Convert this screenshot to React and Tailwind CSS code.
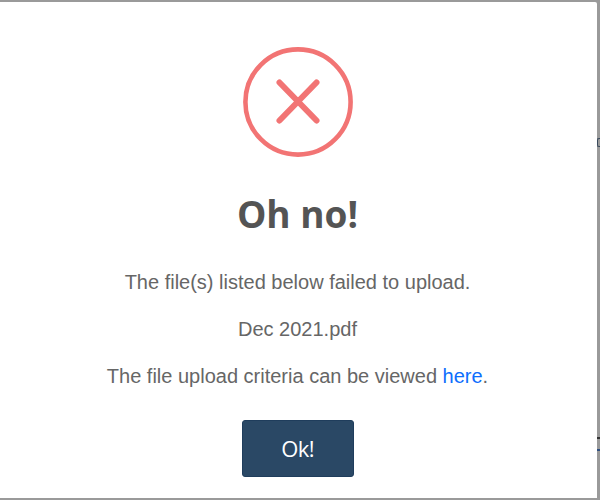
export default function App() {
  return (
    <div className="relative h-[500px] w-[600px] overflow-hidden bg-[#9a9a9a] pt-[2px] pr-[3px] pb-[2px] font-['Liberation_Sans',sans-serif]">
      {/* bits of the page behind the overlay, showing at the right edge */}
      <span className="absolute top-[138px] left-[597px] h-[9px] w-[3px] rounded-l-[2px] border-y border-l border-[#3a4a5c]" />
      <span className="absolute top-[437px] left-[597px] h-[2px] w-[3px] bg-[#333333]" />
      <span className="absolute top-[449px] left-[597px] h-[2px] w-[3px] bg-[#2f4f7f]" />
      <div className="relative flex h-[496px] w-[597px] flex-col items-center rounded-tr-[2px] bg-white pt-[45px] pr-[2px]">
        <svg width="110" height="110" viewBox="0 0 110 110" fill="none" className="shrink-0">
          <circle cx="55" cy="55" r="52.6" stroke="#f27474" strokeWidth="4.6" />
          <path d="M36.5 35.5 L73.5 73.5 M73.5 35.5 L36.5 73.5" stroke="#f27474" strokeWidth="6" strokeLinecap="round" />
        </svg>
        <h2 className="mt-[32px] font-['Open_Sans',sans-serif] text-[37px] leading-[50px] font-bold text-[#545454]">Oh no!</h2>
        <p className="mt-[30px] text-[20px] leading-[27px] text-[#666666]">The file(s) listed below failed to upload.</p>
        <p className="mt-[20px] text-[20px] leading-[27px] text-[#666666]">Dec 2021.pdf</p>
        <p className="mt-[20px] text-[20px] leading-[27px] text-[#666666]">
          The file upload criteria can be viewed <a href="#" className="text-[#0d6efd]">here</a>.
        </p>
        <button className="mt-[30px] h-[57px] w-[112px] rounded-[3px] border border-[#1f3d5c] bg-[#2a4865] font-['Open_Sans',sans-serif] text-[22px] tracking-[-0.6px] text-white">Ok!</button>
      </div>
    </div>
  );
}
